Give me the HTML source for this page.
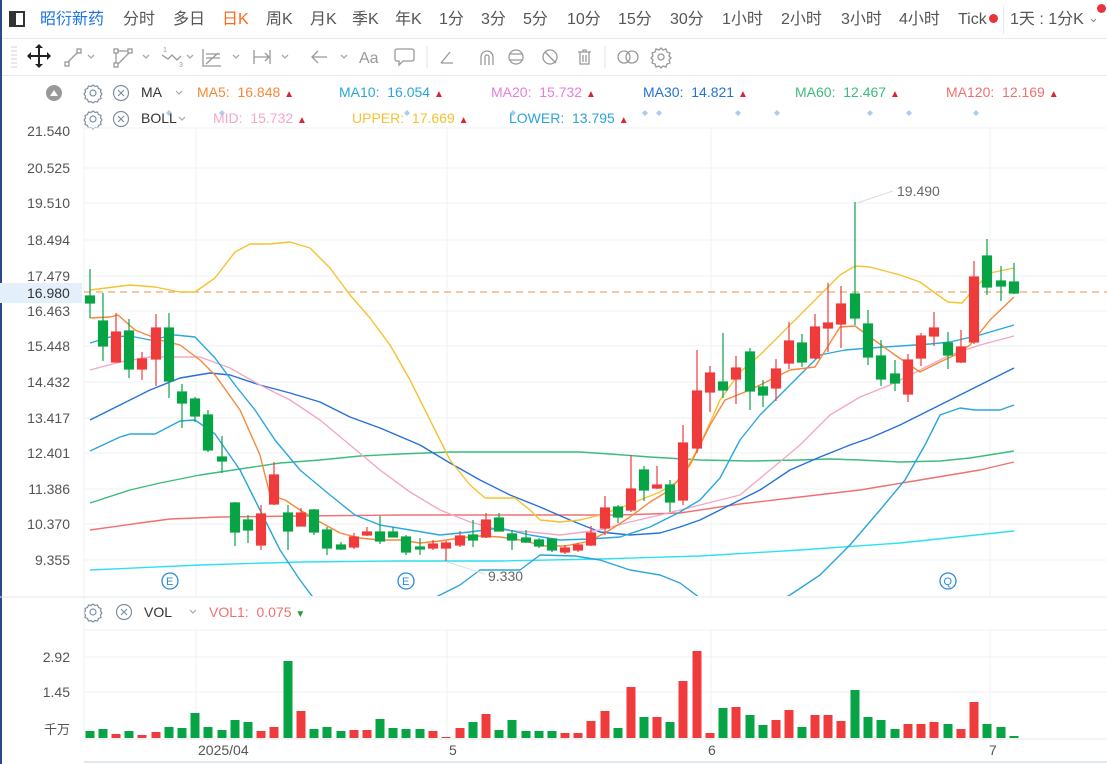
<!DOCTYPE html>
<html><head><meta charset="utf-8"><style>
*{margin:0;padding:0;box-sizing:border-box}
body{width:1107px;height:764px;overflow:hidden;background:#fff;font-family:"Liberation Sans","Noto Sans CJK SC",sans-serif;position:relative}
.t{position:absolute;white-space:nowrap}
.tb{top:10px;font-size:16px;color:#555;line-height:20px}
.lg{font-size:14px}
.ax{font-size:14px;color:#555;text-align:right;width:70px;left:0}
</style></head><body>
<div style="position:absolute;left:0;top:0;width:2px;height:764px;background:#2c4a8a"></div>
<div style="position:absolute;left:2px;top:38px;width:1105px;height:1px;background:#e6e9ee"></div>
<div style="position:absolute;left:2px;top:75px;width:1105px;height:1px;background:#e6e9ee"></div>
<div style="position:absolute;left:9px;top:11px;width:16px;height:16px;border:2px solid #333"></div>
<div style="position:absolute;left:11px;top:13px;width:5px;height:12px;background:#333"></div>
<div class="t tb" style="left:40px;color:#1a73e8">昭衍新药</div>
<div class="t tb" style="left:123px">分时</div>
<div class="t tb" style="left:173px">多日</div>
<div class="t tb" style="left:222px;color:#ff6a1a">日K</div>
<div class="t tb" style="left:266px">周K</div>
<div class="t tb" style="left:310px">月K</div>
<div class="t tb" style="left:352px">季K</div>
<div class="t tb" style="left:395px">年K</div>
<div class="t tb" style="left:439px">1分</div>
<div class="t tb" style="left:481px">3分</div>
<div class="t tb" style="left:523px">5分</div>
<div class="t tb" style="left:567px">10分</div>
<div class="t tb" style="left:618px">15分</div>
<div class="t tb" style="left:670px">30分</div>
<div class="t tb" style="left:722px">1小时</div>
<div class="t tb" style="left:781px">2小时</div>
<div class="t tb" style="left:841px">3小时</div>
<div class="t tb" style="left:899px">4小时</div>
<div class="t tb" style="left:958px">Tick</div>
<div style="position:absolute;left:989px;top:14px;width:9px;height:9px;border-radius:50%;background:#e8333a"></div>
<div style="position:absolute;left:1003px;top:6px;width:1px;height:28px;background:#e6e9ee"></div>
<div class="t tb" style="left:1010px">1天 : 1分K</div>
<div class="t" style="left:1088px;top:10px;font-size:13px;color:#888">⌄</div>
<div style="position:absolute;left:1097px;top:4px;width:9px;height:9px;border-radius:50%;background:#e8333a"></div>
<svg style="position:absolute;left:0;top:40px" width="700" height="34" viewBox="0 40 700 34" fill="none" stroke="#999" stroke-width="1.3">
<g stroke="#ddd"><line x1="11" y1="47" x2="17" y2="47"/><line x1="11" y1="51" x2="17" y2="51"/><line x1="11" y1="55" x2="17" y2="55"/><line x1="11" y1="59" x2="17" y2="59"/><line x1="11" y1="63" x2="17" y2="63"/><line x1="11" y1="67" x2="17" y2="67"/></g>
<g stroke="#222" stroke-width="2"><line x1="29" y1="56" x2="49" y2="56"/><line x1="39" y1="46" x2="39" y2="66"/></g>
<g fill="#222" stroke="none"><path d="M39 44l-4 4h8zM39 68l-4-4h8zM27 56l4-4v8zM51 56l-4-4v8z"/></g>
<rect x="65" y="62" width="4" height="4"/><rect x="77" y="49" width="4" height="4"/><line x1="68" y1="62" x2="78" y2="52"/>
<rect x="114" y="49" width="4" height="4"/><rect x="128" y="49" width="4" height="4"/><rect x="114" y="63" width="4" height="4"/><line x1="118" y1="51" x2="128" y2="51"/><line x1="116" y1="53" x2="116" y2="63"/><line x1="118" y1="64" x2="129" y2="53"/>
<path d="M162 55l6 4 4-4 5 5 4-4"/><text x="163" y="52" font-size="7" fill="#999" stroke="none">1</text><text x="179" y="67" font-size="7" fill="#999" stroke="none">3</text>
<path d="M203 49v17h18M206 64l12-11M206 58h14M206 54h14"/>
<path d="M254 50v14M270 50v14M254 57h15M265 53l4 4-4 4"/>
<path d="M312 57h15M318 51l-6 6 6 6"/>
<text x="359" y="63" font-size="16" fill="#999" stroke="none">Aa</text>
<path d="M397 49h15a2 2 0 0 1 2 2v8a2 2 0 0 1-2 2h-9l-4 4v-4h-2a2 2 0 0 1-2-2v-8a2 2 0 0 1 2-2z"/>
<line x1="427" y1="46" x2="427" y2="68" stroke="#e6e9ee"/>
<path d="M441 63h12M441 63l9-11"/>
<path d="M481 65v-8a6 6 0 0 1 12 0v8M485 65v-8a2 2 0 0 1 4 0v8"/>
<circle cx="516" cy="57" r="7"/><path d="M510 54h12M510 60h12"/>
<circle cx="550" cy="57" r="7"/><line x1="545" y1="52" x2="556" y2="63"/>
<path d="M578 52h13M583 52v-2h3v2M580 52v12h9v-12M583 55v7M586 55v7"/>
<line x1="605" y1="46" x2="605" y2="68" stroke="#e6e9ee"/>
<circle cx="624" cy="57" r="6"/><circle cx="632" cy="57" r="6"/>
<circle cx="661" cy="57" r="3"/><path d="M661 48l2 2 3-1 1 3 3 1-1 3 2 2-2 2 1 3-3 1-1 3-3-1-2 2-2-2-3 1-1-3-3-1 1-3-2-2 2-2-1-3 3-1 1-3 3 1z"/>
<g stroke="#aaa"><path d="M88 55l3 3 3-3M143 55l3 3 3-3M187 55l3 3 3-3M233 55l3 3 3-3M282 55l3 3 3-3M341 55l3 3 3-3"/></g>
</svg>
<svg style="position:absolute;left:0;top:80px" width="1107" height="50" viewBox="0 80 1107 50" fill="none" stroke="#7f8ea3" stroke-width="1.2">
<circle cx="54" cy="93" r="8" fill="#999" stroke="none"/><path d="M50 96l4-6 4 6z" fill="#fff" stroke="none"/>
<g id="gear"><circle cx="93" cy="93" r="3"/><path d="M93 85l2 1.5 2.5-.5 1 2.5 2.5 1-.5 2.5 1.5 2-1.5 2 .5 2.5-2.5 1-1 2.5-2.5-.5-2 1.5-2-1.5-2.5.5-1-2.5-2.5-1 .5-2.5-1.5-2 1.5-2-.5-2.5 2.5-1 1-2.5 2.5.5z"/></g>
<circle cx="121" cy="93" r="7.5"/><path d="M118 90l6 6M124 90l-6 6"/>
<use href="#gear" y="26"/>
<circle cx="121" cy="119" r="7.5"/><path d="M118 116l6 6M124 116l-6 6"/>
<path d="M176 91l3 3 3-3M179 117l3 3 3-3" stroke="#aaa"/>
<g fill="#a8cdf2" stroke="none">
<path d="M169 110l3 3-3 3-3-3zM222 110l3 3-3 3-3-3zM407 110l3 3-3 3-3-3zM513 110l3 3-3 3-3-3zM645 110l3 3-3 3-3-3zM659 110l3 3-3 3-3-3zM738 110l3 3-3 3-3-3zM777 110l3 3-3 3-3-3zM870 110l3 3-3 3-3-3zM909 110l3 3-3 3-3-3zM976 110l3 3-3 3-3-3z"/></g>
</svg>
<div class="t lg" style="left:141px;top:84px;color:#333">MA</div>
<div class="t lg" style="left:197px;top:84px;color:#f5883a">MA5: &nbsp;16.848 <span style="color:#d7262d;font-size:10px">▲</span></div>
<div class="t lg" style="left:339px;top:84px;color:#2aa5d8">MA10: &nbsp;16.054 <span style="color:#d7262d;font-size:10px">▲</span></div>
<div class="t lg" style="left:491px;top:84px;color:#e57ee0">MA20: &nbsp;15.732 <span style="color:#d7262d;font-size:10px">▲</span></div>
<div class="t lg" style="left:643px;top:84px;color:#2571d9">MA30: &nbsp;14.821 <span style="color:#d7262d;font-size:10px">▲</span></div>
<div class="t lg" style="left:795px;top:84px;color:#3dbb7c">MA60: &nbsp;12.467 <span style="color:#d7262d;font-size:10px">▲</span></div>
<div class="t lg" style="left:946px;top:84px;color:#f07070">MA120: &nbsp;12.169 <span style="color:#d7262d;font-size:10px">▲</span></div>
<div class="t lg" style="left:141px;top:110px;color:#333">BOLL</div>
<div class="t lg" style="left:213px;top:110px;color:#f4a7c7">MID: &nbsp;15.732 <span style="color:#d7262d;font-size:10px">▲</span></div>
<div class="t lg" style="left:352px;top:110px;color:#f5c230">UPPER: &nbsp;17.669 <span style="color:#d7262d;font-size:10px">▲</span></div>
<div class="t lg" style="left:509px;top:110px;color:#2aa5d8">LOWER: &nbsp;13.795 <span style="color:#d7262d;font-size:10px">▲</span></div>
<div class="t ax" style="top:123px">21.540</div>
<div class="t ax" style="top:160px">20.525</div>
<div class="t ax" style="top:195px">19.510</div>
<div class="t ax" style="top:232px">18.494</div>
<div class="t ax" style="top:268px">17.479</div>
<div class="t ax" style="top:303px">16.463</div>
<div class="t ax" style="top:338px">15.448</div>
<div class="t ax" style="top:374px">14.432</div>
<div class="t ax" style="top:410px">13.417</div>
<div class="t ax" style="top:445px">12.401</div>
<div class="t ax" style="top:481px">11.386</div>
<div class="t ax" style="top:516px">10.370</div>
<div class="t ax" style="top:552px">9.355</div>
<div class="t" style="left:0;top:283px;width:82px;height:20px;background:#e3f0fc;color:#333;font-size:14px;padding:2px 0 0 27px">16.980</div>
<div class="t ax" style="top:649px">2.92</div>
<div class="t ax" style="top:684px">1.45</div>
<div class="t ax" style="top:719px;font-size:13px">千万</div>
<div class="t" style="left:198px;top:742px;font-size:14px;color:#555">2025/04</div>
<div class="t" style="left:449px;top:742px;font-size:14px;color:#555">5</div>
<div class="t" style="left:708px;top:742px;font-size:14px;color:#555">6</div>
<div class="t" style="left:989px;top:742px;font-size:14px;color:#555">7</div>
<div class="t lg" style="left:144px;top:604px;color:#333">VOL</div>
<div class="t lg" style="left:209px;top:604px;color:#f07070">VOL1: &nbsp;0.075 <span style="color:#2a9a3a;font-size:10px">▼</span></div>
<svg style="position:absolute;left:0;top:600px" width="200" height="26" viewBox="0 600 200 26" fill="none" stroke="#7f8ea3" stroke-width="1.2">
<circle cx="93" cy="612" r="3"/><path d="M93 604l2 1.5 2.5-.5 1 2.5 2.5 1-.5 2.5 1.5 2-1.5 2 .5 2.5-2.5 1-1 2.5-2.5-.5-2 1.5-2-1.5-2.5.5-1-2.5-2.5-1 .5-2.5-1.5-2 1.5-2-.5-2.5 2.5-1 1-2.5 2.5.5z"/>
<circle cx="124" cy="612" r="7.5"/><path d="M121 609l6 6M127 609l-6 6"/>
<path d="M190 610l3 3 3-3" stroke="#aaa"/>
</svg>
<svg style="position:absolute;left:0;top:0" width="1107" height="764" viewBox="0 0 1107 764">
<defs><clipPath id="cp"><rect x="84" y="128" width="1023" height="468"/></clipPath></defs>
<g stroke="#eef2f6" stroke-width="1">
<line x1="84" y1="128" x2="1107" y2="128"/>
<line x1="84" y1="168" x2="1107" y2="168"/><line x1="84" y1="203" x2="1107" y2="203"/><line x1="84" y1="240" x2="1107" y2="240"/><line x1="84" y1="276" x2="1107" y2="276"/><line x1="84" y1="311" x2="1107" y2="311"/><line x1="84" y1="346" x2="1107" y2="346"/><line x1="84" y1="382" x2="1107" y2="382"/><line x1="84" y1="418" x2="1107" y2="418"/><line x1="84" y1="453" x2="1107" y2="453"/><line x1="84" y1="489" x2="1107" y2="489"/><line x1="84" y1="524" x2="1107" y2="524"/><line x1="84" y1="560" x2="1107" y2="560"/>
<line x1="196" y1="128" x2="196" y2="596"/><line x1="447" y1="128" x2="447" y2="596"/><line x1="711" y1="128" x2="711" y2="596"/><line x1="990" y1="128" x2="990" y2="596"/>
<line x1="84" y1="630" x2="1107" y2="630"/><line x1="84" y1="657" x2="1107" y2="657"/><line x1="84" y1="692" x2="1107" y2="692"/>
<line x1="196" y1="630" x2="196" y2="738"/><line x1="447" y1="630" x2="447" y2="738"/><line x1="711" y1="630" x2="711" y2="738"/><line x1="990" y1="630" x2="990" y2="738"/>
</g>
<line x1="84" y1="128" x2="84" y2="738" stroke="#eef2f6"/>
<line x1="0" y1="597" x2="1107" y2="597" stroke="#e3e7ec"/>
<line x1="84" y1="739" x2="1107" y2="739" stroke="#e3e7ec"/>
<line x1="84" y1="762" x2="1107" y2="762" stroke="#e3e7ec" stroke-width="2"/>
<line x1="84" y1="292" x2="1107" y2="292" stroke="#f5a36a" stroke-width="1.2" stroke-dasharray="7,5"/>
<g clip-path="url(#cp)" fill="none" stroke-width="1.4" stroke-linejoin="round">
<polyline stroke="#2de2f0" points="90,570 200,565 300,562 400,561 500,561 600,559 700,556 800,550 900,543 1014,531"/>
<polyline stroke="#f07070" points="90,530 140,523 170,519 220,517 300,516 400,515 500,515 560,515 620,515 680,513 740,504 800,497 860,490 920,480 980,470 1014,462"/>
<polyline stroke="#3dbb7c" points="90,503 130,490 160,483 200,475 240,469 280,463 320,460 360,456 400,454 450,452 500,452 540,452 580,452 610,454 650,457 700,460 750,461 800,460 830,459 860,460 900,462 940,461 970,458 1014,451"/>
<polyline stroke="#2571d9" points="90,420 120,405 150,390 180,378 210,373 230,375 260,385 290,393 320,402 350,417 380,428 420,445 450,463 480,480 510,495 540,507 570,520 600,532 630,535 660,533 680,527 700,520 730,505 760,490 790,470 820,457 850,445 870,438 900,425 930,410 960,395 990,380 1014,368"/>
<polyline stroke="#f4a7c7" points="90,370 120,362 150,357 200,357 230,368 260,385 290,400 320,420 350,445 380,470 410,492 440,510 470,522 500,530 530,532 560,535 600,530 630,522 660,515 700,505 740,495 770,470 800,445 830,415 860,397 890,385 920,370 950,355 980,345 1014,336"/>
<polyline stroke="#f5c230" points="90,290 130,285 155,287 180,292 195,292 215,278 235,252 250,244 270,244 290,242 310,248 330,268 350,295 370,318 390,345 410,380 430,420 450,460 470,485 485,498 515,498 530,510 540,520 560,522 580,520 600,515 620,508 640,500 660,492 680,480 700,445 720,400 740,372 760,355 780,335 800,315 820,295 840,275 855,266 870,267 900,275 920,282 935,293 948,302 962,303 975,288 990,273 1014,268"/>
<polyline stroke="#2aa5d8" points="90,451 120,437 130,434 155,434 180,421 195,420 215,434 240,470 260,510 280,550 300,580 315,600"/>
<polyline stroke="#2aa5d8" points="430,600 440,595 460,585 480,570 520,570 540,555 575,556 600,560 630,570 660,575 680,583 700,598"/>
<polyline stroke="#2aa5d8" points="780,600 790,595 820,575 850,545 880,510 905,480 925,445 940,415 960,408 975,410 1000,410 1014,405"/>
<polyline stroke="#29a8e0" points="90,343 110,337 130,336 150,340 175,335 195,337 215,358 235,385 255,410 275,440 300,470 330,495 355,515 380,525 410,530 440,535 470,532 500,528 530,535 560,540 590,539 620,537 650,527 680,512 700,500 720,478 740,440 760,415 780,395 800,375 820,355 845,350 870,348 900,346 930,344 950,342 980,335 1014,325"/>
<polyline stroke="#f5883a" points="90,318 110,317 118,315 135,330 160,340 180,345 200,360 215,375 240,410 260,455 270,495 285,500 300,510 320,522 340,533 360,538 380,540 400,540 420,543 440,541 460,538 480,536 500,537 520,540 545,546 565,546 590,541 610,530 630,517 650,502 670,490 690,465 710,425 725,400 745,392 760,385 790,370 815,367 840,327 855,326 870,337 895,355 920,372 940,362 955,355 970,345 990,320 1014,297"/>
</g>
<g fill="#06a445" stroke="#06a445" stroke-width="1.2">
<line x1="90" y1="269" x2="90" y2="318"/><rect x="85.5" y="296" width="9" height="7"/>
<line x1="103" y1="293" x2="103" y2="361"/><rect x="98.5" y="321" width="9" height="25"/>
<line x1="129" y1="319" x2="129" y2="378"/><rect x="124.5" y="331" width="9" height="38"/>
<line x1="169" y1="313" x2="169" y2="398"/><rect x="164.5" y="328" width="9" height="53"/>
<line x1="182" y1="384" x2="182" y2="428"/><rect x="177.5" y="392" width="9" height="11"/>
<line x1="195" y1="397" x2="195" y2="422"/><rect x="190.5" y="399" width="9" height="17"/>
<line x1="208" y1="410" x2="208" y2="452"/><rect x="203.5" y="415" width="9" height="35"/>
<line x1="222" y1="436" x2="222" y2="473"/><rect x="217.5" y="457" width="9" height="4"/>
<line x1="235" y1="502" x2="235" y2="546"/><rect x="230.5" y="503" width="9" height="29"/>
<line x1="248" y1="515" x2="248" y2="543"/><rect x="243.5" y="520" width="9" height="10"/>
<line x1="288" y1="505" x2="288" y2="550"/><rect x="283.5" y="513" width="9" height="18"/>
<line x1="314" y1="509" x2="314" y2="535"/><rect x="309.5" y="510" width="9" height="22"/>
<line x1="327" y1="527" x2="327" y2="555"/><rect x="322.5" y="530" width="9" height="18"/>
<line x1="341" y1="542" x2="341" y2="550"/><rect x="336.5" y="545" width="9" height="4"/>
<line x1="380" y1="516" x2="380" y2="544"/><rect x="375.5" y="532" width="9" height="9"/>
<line x1="393" y1="527" x2="393" y2="537"/><rect x="388.5" y="532" width="9" height="5"/>
<line x1="406" y1="535" x2="406" y2="555"/><rect x="401.5" y="537" width="9" height="15"/>
<line x1="420" y1="538" x2="420" y2="555"/><rect x="415.5" y="547" width="9" height="2"/>
<line x1="473" y1="520" x2="473" y2="547"/><rect x="468.5" y="535" width="9" height="5"/>
<line x1="499" y1="513" x2="499" y2="531"/><rect x="494.5" y="518" width="9" height="13"/>
<line x1="512" y1="530" x2="512" y2="550"/><rect x="507.5" y="534" width="9" height="6"/>
<line x1="526" y1="530" x2="526" y2="543"/><rect x="521.5" y="538" width="9" height="4"/>
<line x1="539" y1="538" x2="539" y2="548"/><rect x="534.5" y="540" width="9" height="6"/>
<line x1="552" y1="539" x2="552" y2="552"/><rect x="547.5" y="539" width="9" height="11"/>
<line x1="618" y1="505" x2="618" y2="523"/><rect x="613.5" y="507" width="9" height="10"/>
<line x1="644" y1="466" x2="644" y2="501"/><rect x="639.5" y="470" width="9" height="20"/>
<line x1="670" y1="480" x2="670" y2="512"/><rect x="665.5" y="485" width="9" height="17"/>
<line x1="723" y1="333" x2="723" y2="398"/><rect x="718.5" y="382" width="9" height="8"/>
<line x1="750" y1="348" x2="750" y2="410"/><rect x="745.5" y="352" width="9" height="39"/>
<line x1="763" y1="380" x2="763" y2="407"/><rect x="758.5" y="387" width="9" height="8"/>
<line x1="802" y1="334" x2="802" y2="367"/><rect x="797.5" y="343" width="9" height="19"/>
<line x1="855" y1="202" x2="855" y2="325"/><rect x="850.5" y="294" width="9" height="24"/>
<line x1="868" y1="310" x2="868" y2="365"/><rect x="863.5" y="324" width="9" height="33"/>
<line x1="881" y1="340" x2="881" y2="386"/><rect x="876.5" y="356" width="9" height="23"/>
<line x1="895" y1="360" x2="895" y2="391"/><rect x="890.5" y="374" width="9" height="9"/>
<line x1="948" y1="332" x2="948" y2="369"/><rect x="943.5" y="343" width="9" height="12"/>
<line x1="987" y1="239" x2="987" y2="295"/><rect x="982.5" y="256" width="9" height="31"/>
<line x1="1001" y1="266" x2="1001" y2="301"/><rect x="996.5" y="281" width="9" height="5"/>
<line x1="1014" y1="263" x2="1014" y2="294"/><rect x="1009.5" y="282" width="9" height="11"/>
</g>
<g fill="#ef3b3b" stroke="#ef3b3b" stroke-width="1.2">
<line x1="116" y1="313" x2="116" y2="362"/><rect x="111.5" y="332" width="9" height="30"/>
<line x1="142" y1="352" x2="142" y2="380"/><rect x="137.5" y="359" width="9" height="10"/>
<line x1="156" y1="314" x2="156" y2="386"/><rect x="151.5" y="328" width="9" height="31"/>
<line x1="261" y1="505" x2="261" y2="550"/><rect x="256.5" y="514" width="9" height="31"/>
<line x1="274" y1="462" x2="274" y2="505"/><rect x="269.5" y="475" width="9" height="29"/>
<line x1="301" y1="508" x2="301" y2="526"/><rect x="296.5" y="513" width="9" height="13"/>
<line x1="354" y1="533" x2="354" y2="549"/><rect x="349.5" y="537" width="9" height="10"/>
<line x1="367" y1="527" x2="367" y2="536"/><rect x="362.5" y="532" width="9" height="3"/>
<line x1="433" y1="540" x2="433" y2="550"/><rect x="428.5" y="544" width="9" height="4"/>
<line x1="446" y1="541" x2="446" y2="561"/><rect x="441.5" y="543" width="9" height="5"/>
<line x1="460" y1="531" x2="460" y2="547"/><rect x="455.5" y="536" width="9" height="9"/>
<line x1="486" y1="513" x2="486" y2="538"/><rect x="481.5" y="520" width="9" height="17"/>
<line x1="565" y1="545" x2="565" y2="554"/><rect x="560.5" y="548" width="9" height="4"/>
<line x1="578" y1="543" x2="578" y2="552"/><rect x="573.5" y="545" width="9" height="5"/>
<line x1="591" y1="526" x2="591" y2="546"/><rect x="586.5" y="533" width="9" height="12"/>
<line x1="605" y1="496" x2="605" y2="535"/><rect x="600.5" y="508" width="9" height="20"/>
<line x1="631" y1="455" x2="631" y2="512"/><rect x="626.5" y="489" width="9" height="21"/>
<line x1="657" y1="466" x2="657" y2="489"/><rect x="652.5" y="485" width="9" height="3"/>
<line x1="683" y1="425" x2="683" y2="505"/><rect x="678.5" y="443" width="9" height="57"/>
<line x1="697" y1="350" x2="697" y2="453"/><rect x="692.5" y="391" width="9" height="57"/>
<line x1="710" y1="366" x2="710" y2="412"/><rect x="705.5" y="373" width="9" height="19"/>
<line x1="736" y1="356" x2="736" y2="404"/><rect x="731.5" y="368" width="9" height="11"/>
<line x1="776" y1="359" x2="776" y2="401"/><rect x="771.5" y="369" width="9" height="19"/>
<line x1="789" y1="322" x2="789" y2="369"/><rect x="784.5" y="341" width="9" height="22"/>
<line x1="815" y1="314" x2="815" y2="359"/><rect x="810.5" y="327" width="9" height="31"/>
<line x1="828" y1="283" x2="828" y2="352"/><rect x="823.5" y="323" width="9" height="5"/>
<line x1="841" y1="286" x2="841" y2="348"/><rect x="836.5" y="304" width="9" height="20"/>
<line x1="908" y1="354" x2="908" y2="402"/><rect x="903.5" y="360" width="9" height="34"/>
<line x1="921" y1="333" x2="921" y2="366"/><rect x="916.5" y="336" width="9" height="22"/>
<line x1="934" y1="312" x2="934" y2="346"/><rect x="929.5" y="328" width="9" height="8"/>
<line x1="961" y1="330" x2="961" y2="363"/><rect x="956.5" y="347" width="9" height="15"/>
<line x1="974" y1="261" x2="974" y2="344"/><rect x="969.5" y="277" width="9" height="65"/>
</g>
<line x1="857" y1="203" x2="893" y2="191" stroke="#d8dde3"/>
<text x="897" y="196" font-size="14" fill="#666" font-family="Liberation Sans">19.490</text>
<line x1="447" y1="562" x2="485" y2="574" stroke="#d8dde3"/>
<text x="488" y="581" font-size="14" fill="#666" font-family="Liberation Sans">9.330</text>
<g fill="#fff" stroke="#2a8ae0" stroke-width="1.3" font-family="Liberation Sans" font-size="11">
<circle cx="170" cy="581" r="8"/><circle cx="406" cy="581" r="8"/><circle cx="948" cy="581" r="8"/>
<text x="166" y="585" fill="#2a8ae0" stroke="none">E</text><text x="402" y="585" fill="#2a8ae0" stroke="none">E</text><text x="943.5" y="585" fill="#2a8ae0" stroke="none">Q</text>
</g>
<g fill="#06a445">
<rect x="85.5" y="731" width="9" height="7"/><rect x="98.5" y="729" width="9" height="9"/><rect x="124.5" y="731" width="9" height="7"/><rect x="164.5" y="727" width="9" height="11"/><rect x="177.5" y="728" width="9" height="10"/><rect x="190.5" y="713" width="9" height="25"/><rect x="203.5" y="727" width="9" height="11"/><rect x="217.5" y="730" width="9" height="8"/><rect x="230.5" y="720" width="9" height="18"/><rect x="243.5" y="722" width="9" height="16"/><rect x="283.5" y="661" width="9" height="77"/><rect x="309.5" y="729" width="9" height="9"/><rect x="322.5" y="727" width="9" height="11"/><rect x="336.5" y="731" width="9" height="7"/><rect x="375.5" y="719" width="9" height="19"/><rect x="388.5" y="728" width="9" height="10"/><rect x="401.5" y="729" width="9" height="9"/><rect x="415.5" y="729" width="9" height="9"/><rect x="468.5" y="722" width="9" height="16"/><rect x="494.5" y="730" width="9" height="8"/><rect x="507.5" y="720" width="9" height="18"/><rect x="521.5" y="731" width="9" height="7"/><rect x="534.5" y="731" width="9" height="7"/><rect x="547.5" y="731" width="9" height="7"/><rect x="613.5" y="728" width="9" height="10"/><rect x="639.5" y="717" width="9" height="21"/><rect x="665.5" y="722" width="9" height="16"/><rect x="718.5" y="708" width="9" height="30"/><rect x="745.5" y="715" width="9" height="23"/><rect x="758.5" y="725" width="9" height="13"/><rect x="797.5" y="727" width="9" height="11"/><rect x="850.5" y="690" width="9" height="48"/><rect x="863.5" y="717" width="9" height="21"/><rect x="876.5" y="720" width="9" height="18"/><rect x="890.5" y="729" width="9" height="9"/><rect x="943.5" y="724" width="9" height="14"/><rect x="982.5" y="724" width="9" height="14"/><rect x="996.5" y="727" width="9" height="11"/><rect x="1009.5" y="736" width="9" height="2"/>
</g>
<g fill="#ef3b3b">
<rect x="111.5" y="734" width="9" height="4"/><rect x="137.5" y="735" width="9" height="3"/><rect x="151.5" y="732" width="9" height="6"/><rect x="256.5" y="731" width="9" height="7"/><rect x="269.5" y="727" width="9" height="11"/><rect x="296.5" y="711" width="9" height="27"/><rect x="349.5" y="730" width="9" height="8"/><rect x="362.5" y="730" width="9" height="8"/><rect x="428.5" y="731" width="9" height="7"/><rect x="441.5" y="737" width="9" height="1"/><rect x="455.5" y="728" width="9" height="10"/><rect x="481.5" y="714" width="9" height="24"/><rect x="560.5" y="733" width="9" height="5"/><rect x="573.5" y="733" width="9" height="5"/><rect x="586.5" y="721" width="9" height="17"/><rect x="600.5" y="711" width="9" height="27"/><rect x="626.5" y="687" width="9" height="51"/><rect x="652.5" y="717" width="9" height="21"/><rect x="678.5" y="681" width="9" height="57"/><rect x="692.5" y="651" width="9" height="87"/><rect x="705.5" y="733" width="9" height="5"/><rect x="731.5" y="707" width="9" height="31"/><rect x="771.5" y="720" width="9" height="18"/><rect x="784.5" y="710" width="9" height="28"/><rect x="810.5" y="715" width="9" height="23"/><rect x="823.5" y="715" width="9" height="23"/><rect x="836.5" y="721" width="9" height="17"/><rect x="903.5" y="724" width="9" height="14"/><rect x="916.5" y="724" width="9" height="14"/><rect x="929.5" y="722" width="9" height="16"/><rect x="956.5" y="729" width="9" height="9"/><rect x="969.5" y="702" width="9" height="36"/>
</g>
</svg>
</body></html>
